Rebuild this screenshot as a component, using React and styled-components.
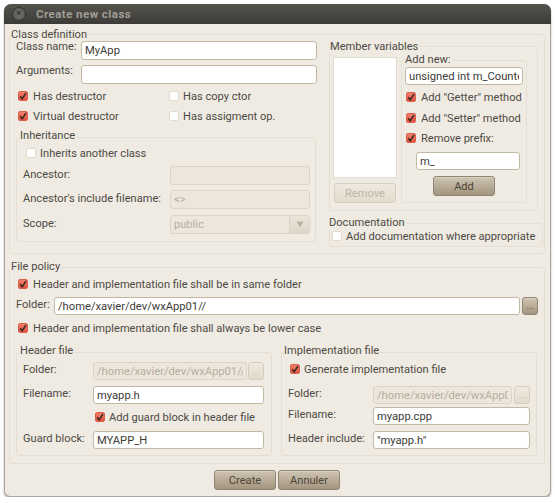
import React from "react";
import styled, { createGlobalStyle } from "styled-components";

const Global = createGlobalStyle`
  html, body { margin: 0; padding: 0; background: #fff; }
  body {
    font-family: Roboto, "Noto Sans", sans-serif;
    font-size: 11.1px;
    color: #4c4a45;
  }
  * { box-sizing: border-box; }
`;

const Window = styled.div`
  width: 547px;
  height: 493px;
  margin: 4px 0 0 4px;
  background: #f0ebe2;
  border: 1px solid #a9a59c;
  border-top: 0;
  border-radius: 7px 7px 6px 6px;
  box-shadow: 0 1px 2px rgba(0, 0, 0, 0.35);
  display: flex;
  flex-direction: column;
`;

const TitleBar = styled.div`
  height: 20px;
  margin: 0 -1px;
  flex: none;
  display: flex;
  align-items: center;
  padding-left: 8px;
  gap: 10px;
  border-radius: 7px 7px 0 0;
  background: linear-gradient(#55534d, #3c3b37);
  color: #a09e94;
  font-weight: 700;
  font-size: 11.5px;
  letter-spacing: 0.45px;
`;

const CloseDot = styled.div`
  width: 14px;
  height: 14px;
  border-radius: 50%;
  background: radial-gradient(circle, #6e6c66, #5a5852);
  border: 1px solid #33322e;
  color: #24231f;
  font-size: 9px;
  line-height: 11px;
  font-weight: 400;
  text-align: center;
`;

const Body = styled.div`
  flex: 1;
  padding: 4px 4px 0 4px;
  display: flex;
  flex-direction: column;
`;

const Group = styled.fieldset`
  margin: ${(p) => p.$margin || "0"};
  padding: ${(p) => p.$pad || "0"};
  width: ${(p) => p.$w}px;
  height: ${(p) => p.$h}px;
  min-width: 0;
  flex: none;
  border: 1px solid #e5dfd3;
  border-radius: 3px;
`;

const Legend = styled.legend`
  height: ${(p) => p.$h || 16}px;
  line-height: 14px;
  padding: 0 1px;
  margin-left: ${(p) => p.$left ?? 0}px;
  color: #4c4a45;
`;

const Columns = styled.div`
  display: flex;
  gap: ${(p) => p.$gap || 0}px;
  margin-left: ${(p) => p.$left || 0}px;
`;

const Stack = styled.div`
  display: flex;
  flex-direction: column;
  flex: none;
  width: ${(p) => (p.$w ? p.$w + "px" : "auto")};
  margin: ${(p) => p.$margin || "0"};
`;

const Row = styled.div`
  display: flex;
  align-items: flex-start;
  flex: none;
  margin: ${(p) => p.$margin || "0"};
`;

const Label = styled.label`
  flex: none;
  width: ${(p) => p.$w}px;
  line-height: ${(p) => p.$lh || 15}px;
  white-space: nowrap;
`;

const Input = styled.input`
  flex: none;
  display: block;
  width: ${(p) => p.$w}px;
  height: ${(p) => p.$h || 18}px;
  margin: ${(p) => p.$margin || "0"};
  padding: 0 3px;
  font: inherit;
  font-size: 11.2px;
  color: #3c3b37;
  background: #fff;
  border: 1px solid #c2b9a4;
  border-radius: 3px;
  outline: none;
  &:disabled {
    background: #ece6db;
    border-color: #dcd4c5;
    color: #b5ae9f;
  }
`;

const ListBox = styled.div`
  width: 64px;
  height: 121px;
  background: #fff;
  border: 1px solid #e2dccf;
`;

const Button = styled.button`
  flex: none;
  display: block;
  width: ${(p) => p.$w || 62}px;
  height: ${(p) => p.$h || 20}px;
  margin: ${(p) => p.$margin || "0"};
  padding: 0;
  font: inherit;
  font-size: ${(p) => p.$size || 11.1}px;
  color: #4c4538;
  border: 1px solid #8f8470;
  border-radius: 3px;
  background: linear-gradient(#cfc4b2, #a3957f);
  box-shadow: inset 0 1px 0 rgba(255, 255, 255, 0.25);
  &:disabled {
    color: #bdb6a8;
    border-color: #d5cdbe;
    background: linear-gradient(#efeadf, #e2dbcd);
    box-shadow: none;
  }
`;

const SelectBox = styled.div`
  width: 140px;
  height: 19px;
  display: flex;
  border: 1px solid #dcd4c5;
  border-radius: 3px;
  background: #ece6db;
  color: #b5ae9f;
  line-height: 17px;
  padding-left: 3px;
`;

const SelectValue = styled.div`
  flex: 1;
`;

const SelectArrow = styled.div`
  width: 20px;
  border-left: 1px solid #dcd4c5;
  background: linear-gradient(#ebe5da, #ddd5c7);
  display: flex;
  align-items: center;
  justify-content: center;
`;

const CheckWrap = styled.div`
  display: flex;
  align-items: center;
  height: 12px;
  gap: ${(p) => p.$gap ?? 5}px;
  white-space: nowrap;
  margin: ${(p) => p.$margin || "0"};
  width: ${(p) => (p.$w ? p.$w + "px" : "auto")};
  flex: none;
`;

const CheckBox = styled.span`
  width: 10px;
  height: 10px;
  flex: none;
  border-radius: 2px;
  display: flex;
  align-items: center;
  justify-content: center;
  border: 1px solid ${(p) => (p.$on ? "#d8604c" : "#e0dacd")};
  background: ${(p) => (p.$on ? "linear-gradient(#f0806c, #e4533f)" : "#fff")};
`;

const Check = ({ on, children, ...rest }) => (
  <CheckWrap {...rest}>
    <CheckBox $on={on}>
      {on && (
        <svg width="8" height="8" viewBox="0 0 8 8">
          <path d="M1.2 4.2 L3.2 6.8 L7 1" fill="none" stroke="#3a2a24" strokeWidth="1.5" />
        </svg>
      )}
    </CheckBox>
    <span>{children}</span>
  </CheckWrap>
);

export default function App() {
  return (
    <>
      <Global />
      <Window>
        <TitleBar>
          <CloseDot>×</CloseDot>
          <span>Create new class</span>
        </TitleBar>
        <Body>
          <Group $w={536} $h={226}>
            <Legend $h={12} $left={0}>Class definition</Legend>
            <Columns $gap={12} $left={6}>
              <Stack $w={301} $margin="1px 0 0 0">
                <Row>
                  <Label $w={65} $lh={12}>Class name:</Label>
                  <Input $w={236} $h={19} defaultValue="MyApp" />
                </Row>
                <Row $margin="5px 0 0 0">
                  <Label $w={65} $lh={12}>Arguments:</Label>
                  <Input $w={236} $h={19} />
                </Row>
                <Row $margin="6px 0 0 2px">
                  <Check on $w={151}>Has destructor</Check>
                  <Check $gap={4}>Has copy ctor</Check>
                </Row>
                <Row $margin="8px 0 0 2px">
                  <Check on $w={151}>Virtual destructor</Check>
                  <Check $gap={4}>Has assigment op.</Check>
                </Row>
                <Group $w={300} $h={113} $margin="7px 0 0 0" $pad="0 5px 0 6px">
                  <Legend $left={-4}>Inheritance</Legend>
                  <Check $margin="2px 0 0 3px" $gap={4}>Inherits another class</Check>
                  <Row $margin="7px 0 0 0">
                    <Label $w={147} $lh={18}>Ancestor:</Label>
                    <Input $w={140} $h={19} disabled />
                  </Row>
                  <Row $margin="5px 0 0 0">
                    <Label $w={147} $lh={18}>Ancestor's include filename:</Label>
                    <Input $w={140} $h={19} disabled defaultValue="<>" />
                  </Row>
                  <Row $margin="6px 0 0 0">
                    <Label $w={147} $lh={17}>Scope:</Label>
                    <SelectBox>
                      <SelectValue>public</SelectValue>
                      <SelectArrow>
                        <svg width="8" height="7" viewBox="0 0 8 7">
                          <path d="M0.5 0.5 H7.5 L4 6.5 Z" fill="#b8b1a2" />
                        </svg>
                      </SelectArrow>
                    </SelectBox>
                  </Row>
                </Group>
              </Stack>
              <Stack $w={214}>
                <Group $w={209} $h={171} $pad="0 0 0 3px">
                  <Legend $h={12} $left={-4}>Member variables</Legend>
                  <Columns $gap={4}>
                    <Stack $w={64} $margin="5px 0 0 0">
                      <ListBox />
                      <Button disabled $margin="5px 0 0 1px">Remove</Button>
                    </Stack>
                    <Group $w={126} $h={150} $margin="1px 0 0 0" $pad="0 0 0 3px">
                      <Legend $h={14} $left={-1}>Add new:</Legend>
                      <Input $w={118} defaultValue="unsigned int m_Counter" />
                      <Check on $margin="6px 0 0 1px">Add "Getter" method</Check>
                      <Check on $margin="9px 0 0 1px">Add "Setter" method</Check>
                      <Check on $margin="8px 0 0 1px">Remove prefix:</Check>
                      <Input $w={104} $margin="8px 0 0 11px" defaultValue="m_" />
                      <Button $margin="6px 0 0 28px">Add</Button>
                    </Group>
                  </Columns>
                </Group>
                <Group $w={214} $h={31} $margin="5px 0 0 0" $pad="0 0 0 2px">
                  <Legend $h={14} $left={-4}>Documentation</Legend>
                  <Check $gap={4}>Add documentation where appropriate</Check>
                </Group>
              </Stack>
            </Columns>
          </Group>

          <Group $w={536} $h={204} $margin="6px 0 0 0" $pad="0 6px">
            <Legend $h={14} $left={-6}>File policy</Legend>
            <Check on $margin="4px 0 0 2px">Header and implementation file shall be in same folder</Check>
            <Row $margin="7px 0 0 0">
              <Label $w={38} $lh={16}>Folder:</Label>
              <Input $w={466} defaultValue="/home/xavier/dev/wxApp01//" />
              <Button $w={16} $h={18} $size={9} $margin="0 0 0 2px">...</Button>
            </Row>
            <Check on $margin="7px 0 0 2px">Header and implementation file shall always be lower case</Check>
            <Columns $gap={9}>
              <Group $w={256} $h={112} $margin="10px 0 0 0" $pad="0 0 0 6px">
                <Legend $left={-4}>Header file</Legend>
                <Row $margin="2px 0 0 0">
                  <Label $w={70} $lh={16}>Folder:</Label>
                  <Input $w={154} disabled defaultValue="/home/xavier/dev/wxApp01//include" />
                  <Button disabled $w={16} $h={18} $size={9} $margin="0 0 0 1px">...</Button>
                </Row>
                <Row $margin="6px 0 0 0">
                  <Label $w={70} $lh={15}>Filename:</Label>
                  <Input $w={171} defaultValue="myapp.h" />
                </Row>
                <Check on $margin="7px 0 0 72px" $gap={4}>Add guard block in header file</Check>
                <Row $margin="8px 0 0 0">
                  <Label $w={70} $lh={15}>Guard block:</Label>
                  <Input $w={171} defaultValue="MYAPP_H" />
                </Row>
              </Group>
              <Group $w={256} $h={112} $margin="10px 0 0 0" $pad="0 0 0 6px">
                <Legend $left={-5}>Implementation file</Legend>
                <Check on $margin="3px 0 0 2px" $gap={4}>Generate implementation file</Check>
                <Row $margin="11px 0 0 0">
                  <Label $w={85} $lh={16}>Folder:</Label>
                  <Input $w={139} disabled defaultValue="/home/xavier/dev/wxApp01//src" />
                  <Button disabled $w={16} $h={18} $size={9} $margin="0 0 0 2px">...</Button>
                </Row>
                <Row $margin="3px 0 0 0">
                  <Label $w={85} $lh={16}>Filename:</Label>
                  <Input $w={157} defaultValue="myapp.cpp" />
                </Row>
                <Row $margin="6px 0 0 0">
                  <Label $w={85} $lh={15}>Header include:</Label>
                  <Input $w={157} defaultValue={'"myapp.h"'} />
                </Row>
              </Group>
            </Columns>
          </Group>

          <Columns $gap={2} $left={205}>
            <Button $margin="6px 0 0 0">Create</Button>
            <Button $margin="6px 0 0 0">Annuler</Button>
          </Columns>
        </Body>
      </Window>
    </>
  );
}
